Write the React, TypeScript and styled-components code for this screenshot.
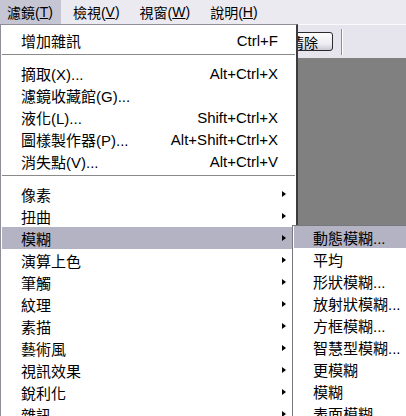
import React from 'react';
import styled, { createGlobalStyle } from 'styled-components';

const GlobalStyle = createGlobalStyle`
  html, body, #root {
    margin: 0;
    height: 100%;
  }
  body {
    overflow: hidden;
    background: #808080;
    color: #000;
    font-family: "Liberation Sans", "Noto Sans CJK TC", sans-serif;
  }
`;

const Screen = styled.div`
  position: relative;
  display: flex;
  flex-direction: column;
  height: 100vh;
`;

const MenuBar = styled.div`
  display: flex;
  gap: 5px;
  height: 24px;
  background: #ebeaf1;
`;

const MenuTitle = styled.div<{ $open?: boolean }>`
  display: flex;
  align-items: center;
  padding: 0 8px 0 7px;
  font-size: 14px;
  white-space: nowrap;
  background: ${(p) => (p.$open ? '#c6c5d4' : 'transparent')};
`;

const Toolbar = styled.div`
  display: flex;
  align-items: center;
  gap: 8px;
  height: 33px;
  padding-left: 275px;
  background: #e6e5ed;
  border-top: 1px solid #fafafc;
`;

const ToolButton = styled.div`
  display: flex;
  align-items: center;
  justify-content: center;
  width: 56px;
  height: 17px;
  border: 1px solid #2a2a2a;
  border-radius: 3px;
  font-size: 14px;
  background: linear-gradient(#fdfdfe, #ececf2 65%, #c9c8d8);
`;

const ToolSeparator = styled.div`
  width: 1px;
  height: 26px;
  background: #8c8c94;
  border-right: 1px solid #fff;
`;

const Canvas = styled.div`
  flex: 1;
  background: #808080;
`;

const Dropdown = styled.div`
  position: absolute;
  top: 24px;
  left: 0;
  width: 298px;
  box-sizing: border-box;
  padding: 4px 1px;
  background: #fff;
  border: 1px solid #8e8e96;
  border-right: 2px solid #3c3c3c;
`;

const SubMenu = styled.div`
  position: absolute;
  top: -2px;
  left: calc(100% - 3px);
  width: 130px;
  padding: 0 1px;
  background: #fff;
  border: 1px solid #77777d;
`;

const Item = styled.div<{ $active?: boolean }>`
  position: relative;
  display: flex;
  align-items: center;
  height: 22px;
  padding-left: 19px;
  font-size: 15px;
  white-space: nowrap;
  background: ${(p) => (p.$active ? '#b3b3c4' : 'transparent')};
`;

const Label = styled.span`
  flex: 1;
`;

const Shortcut = styled.span`
  font-size: 15px;
`;

const ArrowCell = styled.span`
  display: flex;
  align-items: center;
  box-sizing: border-box;
  width: 17px;
  padding-left: 4px;
`;

const Arrow = styled.span`
  width: 0;
  height: 0;
  border-top: 3.5px solid transparent;
  border-bottom: 3.5px solid transparent;
  border-left: 4px solid #000;
`;

const Separator = styled.div`
  height: 1px;
  margin: 3px 0 7px;
  background: #8a8a8a;
`;

type Entry = { label: string; shortcut?: string; sub?: boolean } | 'sep';

const entries: Entry[] = [
  { label: '增加雜訊', shortcut: 'Ctrl+F' },
  'sep',
  { label: '摘取(X)...', shortcut: 'Alt+Ctrl+X' },
  { label: '濾鏡收藏館(G)...' },
  { label: '液化(L)...', shortcut: 'Shift+Ctrl+X' },
  { label: '圖樣製作器(P)...', shortcut: 'Alt+Shift+Ctrl+X' },
  { label: '消失點(V)...', shortcut: 'Alt+Ctrl+V' },
  'sep',
  { label: '像素', sub: true },
  { label: '扭曲', sub: true },
  { label: '模糊', sub: true },
  { label: '演算上色', sub: true },
  { label: '筆觸', sub: true },
  { label: '紋理', sub: true },
  { label: '素描', sub: true },
  { label: '藝術風', sub: true },
  { label: '視訊效果', sub: true },
  { label: '銳利化', sub: true },
  { label: '雜訊', sub: true },
];

const blurItems = [
  '動態模糊...',
  '平均',
  '形狀模糊...',
  '放射狀模糊...',
  '方框模糊...',
  '智慧型模糊...',
  '更模糊',
  '模糊',
  '表面模糊...',
];

const menus = [
  { name: '濾鏡', key: 'T' },
  { name: '檢視', key: 'V' },
  { name: '視窗', key: 'W' },
  { name: '說明', key: 'H' },
];

export default function App() {
  return (
    <Screen>
      <GlobalStyle />
      <MenuBar>
        {menus.map((m, i) => (
          <MenuTitle key={m.key} $open={i === 0}>
            {m.name}(<u>{m.key}</u>)
          </MenuTitle>
        ))}
      </MenuBar>
      <Toolbar>
        <ToolButton>清除</ToolButton>
        <ToolSeparator />
      </Toolbar>
      <Canvas />

      <Dropdown>
        {entries.map((e, i) => {
          if (e === 'sep') return <Separator key={i} />;
          const open = e.label === '模糊';
          return (
            <Item key={i} $active={open}>
              <Label>{e.label}</Label>
              {e.shortcut && <Shortcut>{e.shortcut}</Shortcut>}
              <ArrowCell>{e.sub && <Arrow />}</ArrowCell>
              {open && (
                <SubMenu>
                  {blurItems.map((b, j) => (
                    <Item key={b + j} $active={j === 0}>
                      <Label>{b}</Label>
                    </Item>
                  ))}
                </SubMenu>
              )}
            </Item>
          );
        })}
      </Dropdown>
    </Screen>
  );
}
